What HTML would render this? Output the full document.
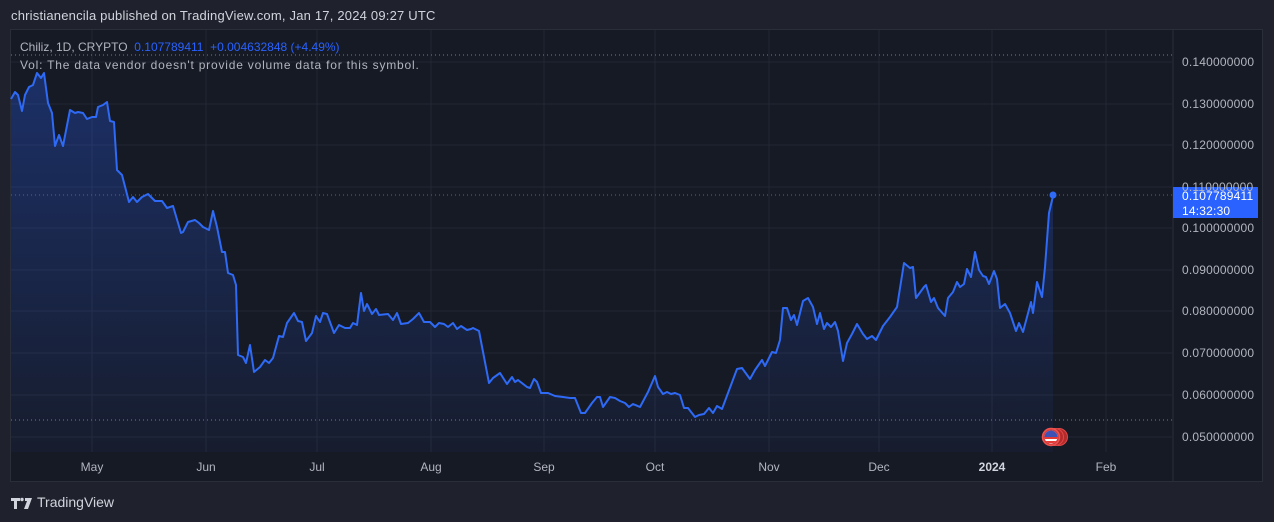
<!DOCTYPE html>
<html><head><meta charset="utf-8"><style>
html,body{margin:0;padding:0;width:1274px;height:522px;overflow:hidden;background:#1f222d;font-family:"Liberation Sans",sans-serif;}
.hdr{position:absolute;left:11px;top:8px;font-size:13px;color:#d1d4dc;letter-spacing:0.2px}
.panel{position:absolute;left:10px;top:29px;width:1253px;height:453px;background:#161a25;border:1px solid #2a2e39;box-sizing:border-box}
.lg{position:absolute;font-size:12px;color:#b2b5be}
.pa{position:absolute;left:1182px;font-size:12px;color:#b2b5be;letter-spacing:0.2px}
.ta{position:absolute;top:460px;font-size:12px;color:#b2b5be;transform:translateX(-50%)}
.foot{position:absolute;left:37px;top:494px;font-size:14px;color:#d1d4dc}
</style></head><body>
<div class="hdr">christianencila published on TradingView.com, Jan 17, 2024 09:27 UTC</div>
<div class="panel"></div>
<svg width="1274" height="522" style="position:absolute;left:0;top:0">
<defs><linearGradient id="g" x1="0" y1="0" x2="0" y2="1"><stop offset="0" stop-color="#2962ff" stop-opacity="0.3"/><stop offset="1" stop-color="#2962ff" stop-opacity="0.04"/></linearGradient></defs>
<g stroke="#232734" stroke-width="1">
<line x1="11" x2="1172" y1="62" y2="62"/><line x1="11" x2="1172" y1="104" y2="104"/><line x1="11" x2="1172" y1="145" y2="145"/><line x1="11" x2="1172" y1="187" y2="187"/><line x1="11" x2="1172" y1="228" y2="228"/><line x1="11" x2="1172" y1="270" y2="270"/><line x1="11" x2="1172" y1="311" y2="311"/><line x1="11" x2="1172" y1="353" y2="353"/><line x1="11" x2="1172" y1="395" y2="395"/><line x1="11" x2="1172" y1="437" y2="437"/>
<line x1="92" x2="92" y1="30" y2="452"/><line x1="206" x2="206" y1="30" y2="452"/><line x1="317" x2="317" y1="30" y2="452"/><line x1="431" x2="431" y1="30" y2="452"/><line x1="544" x2="544" y1="30" y2="452"/><line x1="655" x2="655" y1="30" y2="452"/><line x1="769" x2="769" y1="30" y2="452"/><line x1="879" x2="879" y1="30" y2="452"/><line x1="992" x2="992" y1="30" y2="452"/><line x1="1106" x2="1106" y1="30" y2="452"/>
</g>
<line x1="1173" x2="1173" y1="30" y2="481" stroke="#2a2e39"/>
<line x1="11" x2="1172" y1="55" y2="55" stroke="#787b86" stroke-dasharray="1 3"/>
<line x1="11" x2="1172" y1="420" y2="420" stroke="#787b86" stroke-dasharray="1 3"/>
<line x1="11" x2="1172" y1="195" y2="195" stroke="#2962ff" stroke-dasharray="1 3"/>
<path fill="url(#g)" d="M11,99 L15,92 L18,95 L22,111 L25,95 L29,87 L33,85 L37,73 L41,78 L44,73 L48,103 L52,113 L55,146 L59,135 L63,146 L70,110 L75,113 L78,112 L83,113 L87,119 L92,117 L96,117 L98,107 L103,105 L107,102 L110,121 L114,122 L117,170 L122,175 L129,202 L133,197 L137,202 L142,197 L148,194 L155,201 L162,201 L167,208 L173,206 L181,233 L183,232 L188,222 L195,220 L199,223 L203,227 L209,230 L213,211 L217,227 L222,252 L225,252 L228,273 L233,275 L236,285 L238,355 L243,357 L246,363 L250,345 L254,372 L260,367 L265,360 L269,363 L273,358 L279,336 L283,337 L287,323 L294,313 L298,321 L302,322 L306,341 L312,333 L316,316 L320,322 L323,313 L327,314 L334,333 L339,325 L345,328 L350,328 L353,323 L357,325 L361,293 L364,311 L367,304 L372,314 L376,309 L379,315 L388,314 L393,320 L397,313 L401,324 L408,323 L413,319 L419,313 L424,322 L430,322 L435,327 L439,323 L444,324 L448,327 L453,323 L457,329 L461,326 L467,330 L471,329 L473,328 L479,331 L489,383 L493,378 L500,373 L507,384 L512,377 L515,382 L518,380 L527,387 L530,388 L534,379 L537,382 L541,393 L548,393 L555,396 L563,397 L570,398 L575,398 L581,413 L585,413 L592,403 L597,397 L600,397 L603,407 L610,397 L615,398 L620,401 L625,403 L629,407 L633,404 L640,407 L648,392 L655,376 L658,387 L663,394 L667,392 L671,394 L675,393 L680,395 L684,408 L688,408 L695,417 L699,415 L704,414 L709,408 L713,413 L717,406 L722,409 L728,393 L737,369 L742,368 L750,379 L755,370 L762,360 L765,366 L772,352 L776,353 L780,340 L783,308 L787,308 L791,320 L794,315 L797,325 L803,301 L808,298 L813,307 L817,324 L820,313 L824,329 L827,323 L831,327 L835,322 L838,331 L843,361 L847,343 L852,334 L857,324 L863,334 L867,339 L872,336 L876,340 L883,326 L890,317 L897,307 L904,263 L910,268 L913,267 L916,298 L924,287 L926,285 L931,302 L934,298 L938,308 L945,316 L948,298 L953,292 L957,282 L960,287 L964,284 L967,269 L971,277 L975,252 L979,270 L983,276 L986,277 L989,284 L994,271 L997,279 L1000,308 L1005,304 L1010,313 L1016,331 L1019,323 L1023,332 L1031,302 L1033,313 L1037,282 L1042,297 L1045,267 L1049,213 L1053,196 L1053,452 L11,452 Z"/>
<path fill="none" stroke="#2e6af5" stroke-width="2" stroke-linejoin="round" d="M11,99 L15,92 L18,95 L22,111 L25,95 L29,87 L33,85 L37,73 L41,78 L44,73 L48,103 L52,113 L55,146 L59,135 L63,146 L70,110 L75,113 L78,112 L83,113 L87,119 L92,117 L96,117 L98,107 L103,105 L107,102 L110,121 L114,122 L117,170 L122,175 L129,202 L133,197 L137,202 L142,197 L148,194 L155,201 L162,201 L167,208 L173,206 L181,233 L183,232 L188,222 L195,220 L199,223 L203,227 L209,230 L213,211 L217,227 L222,252 L225,252 L228,273 L233,275 L236,285 L238,355 L243,357 L246,363 L250,345 L254,372 L260,367 L265,360 L269,363 L273,358 L279,336 L283,337 L287,323 L294,313 L298,321 L302,322 L306,341 L312,333 L316,316 L320,322 L323,313 L327,314 L334,333 L339,325 L345,328 L350,328 L353,323 L357,325 L361,293 L364,311 L367,304 L372,314 L376,309 L379,315 L388,314 L393,320 L397,313 L401,324 L408,323 L413,319 L419,313 L424,322 L430,322 L435,327 L439,323 L444,324 L448,327 L453,323 L457,329 L461,326 L467,330 L471,329 L473,328 L479,331 L489,383 L493,378 L500,373 L507,384 L512,377 L515,382 L518,380 L527,387 L530,388 L534,379 L537,382 L541,393 L548,393 L555,396 L563,397 L570,398 L575,398 L581,413 L585,413 L592,403 L597,397 L600,397 L603,407 L610,397 L615,398 L620,401 L625,403 L629,407 L633,404 L640,407 L648,392 L655,376 L658,387 L663,394 L667,392 L671,394 L675,393 L680,395 L684,408 L688,408 L695,417 L699,415 L704,414 L709,408 L713,413 L717,406 L722,409 L728,393 L737,369 L742,368 L750,379 L755,370 L762,360 L765,366 L772,352 L776,353 L780,340 L783,308 L787,308 L791,320 L794,315 L797,325 L803,301 L808,298 L813,307 L817,324 L820,313 L824,329 L827,323 L831,327 L835,322 L838,331 L843,361 L847,343 L852,334 L857,324 L863,334 L867,339 L872,336 L876,340 L883,326 L890,317 L897,307 L904,263 L910,268 L913,267 L916,298 L924,287 L926,285 L931,302 L934,298 L938,308 L945,316 L948,298 L953,292 L957,282 L960,287 L964,284 L967,269 L971,277 L975,252 L979,270 L983,276 L986,277 L989,284 L994,271 L997,279 L1000,308 L1005,304 L1010,313 L1016,331 L1019,323 L1023,332 L1031,302 L1033,313 L1037,282 L1042,297 L1045,267 L1049,213 L1053,196"/>
<circle cx="1053" cy="195" r="3.5" fill="#2e6af5"/>
<g>
<circle cx="1059" cy="437" r="8.5" fill="#b52a2a" stroke="#e04848"/>
<circle cx="1055" cy="437" r="8.5" fill="#b52a2a" stroke="#e04848"/>
<circle cx="1051" cy="437" r="8.5" fill="#d23a3a" stroke="#ef5350" stroke-width="1.5"/>
<clipPath id="c"><circle cx="1051" cy="437" r="6.5"/></clipPath>
<g clip-path="url(#c)"><rect x="1044" y="430" width="14" height="14" fill="#fff"/><rect x="1044" y="437" width="14" height="2" fill="#e53935"/><rect x="1044" y="441" width="14" height="2" fill="#e53935"/><rect x="1044" y="430" width="14" height="7" fill="#3f51b5"/></g>
</g>
<rect x="1173" y="187" width="85" height="31" fill="#2962ff"/>
<g fill="#d1d4dc"><path d="M11,498 h9 v3 h-3 v8 h-3 v-8 h-3z"/><circle cx="22" cy="499.5" r="1.7"/><path d="M25,498 h7 l-4,11 h-4 l3,-8 h-2z"/></g>
</svg>
<div class="lg" style="left:20px;top:40px">Chiliz, 1D, CRYPTO &nbsp;<span style="color:#2962ff">0.107789411 &nbsp;+0.004632848 (+4.49%)</span></div>
<div class="lg" style="left:20px;top:58px;letter-spacing:0.8px">Vol: The data vendor doesn't provide volume data for this symbol.</div>
<div class="pa" style="top:55px">0.140000000</div>
<div class="pa" style="top:97px">0.130000000</div>
<div class="pa" style="top:138px">0.120000000</div>
<div class="pa" style="top:180px">0.110000000</div>
<div class="pa" style="top:221px">0.100000000</div>
<div class="pa" style="top:263px">0.090000000</div>
<div class="pa" style="top:304px">0.080000000</div>
<div class="pa" style="top:346px">0.070000000</div>
<div class="pa" style="top:388px">0.060000000</div>
<div class="pa" style="top:430px">0.050000000</div>
<div class="pa" style="top:189px;color:#fff">0.107789411</div>
<div class="pa" style="top:204px;color:#fff">14:32:30</div>
<div class="ta" style="left:92px">May</div><div class="ta" style="left:206px">Jun</div><div class="ta" style="left:317px">Jul</div><div class="ta" style="left:431px">Aug</div><div class="ta" style="left:544px">Sep</div><div class="ta" style="left:655px">Oct</div><div class="ta" style="left:769px">Nov</div><div class="ta" style="left:879px">Dec</div><div class="ta" style="left:992px;font-weight:bold;color:#d1d4dc">2024</div><div class="ta" style="left:1106px">Feb</div>
<div class="foot">TradingView</div>
</body></html>
